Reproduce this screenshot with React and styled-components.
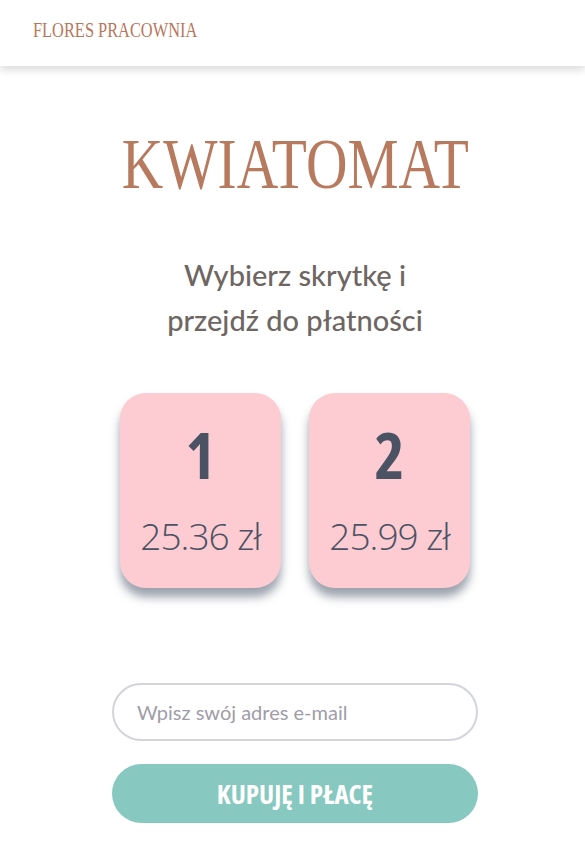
import React from "react";
import styled, { createGlobalStyle } from "styled-components";

const Global = createGlobalStyle`
  html, body { margin: 0; padding: 0; background: #ffffff; }
  body { font-family: Lato, "Open Sans", sans-serif; }
  * { box-sizing: border-box; }
`;

const Header = styled.header`
  height: 66px;
  background: #fff;
  box-shadow: 0 4px 8px rgba(0, 0, 0, 0.14);
  display: flex;
  align-items: center;
  padding-left: 33px;
`;

const Brand = styled.div`
  font-family: "Liberation Serif", serif;
  font-size: 21px;
  color: #b8775c;
  transform: scaleX(0.78);
  transform-origin: left center;
  white-space: nowrap;
  margin-top: -5px;
`;

const Main = styled.main`
  display: flex;
  flex-direction: column;
  align-items: center;
  padding-left: 5px;
`;

const Title = styled.h1`
  margin: 63px 0 0;
  font-family: "Liberation Serif", serif;
  font-weight: 400;
  font-size: 71px;
  line-height: 1;
  color: #b87a5e;
  transform: scaleX(0.81);
  white-space: nowrap;
`;

const Subtitle = styled.p`
  margin: 52px 0 0;
  font-family: Lato, sans-serif;
  font-size: 29px;
  font-weight: 500;
  line-height: 45px;
  color: #6e6662;
  text-align: center;
`;

const Lockers = styled.div`
  display: flex;
  gap: 28px;
  margin-top: 51px;
`;

const Locker = styled.button`
  width: 161px;
  height: 195px;
  border: none;
  border-radius: 26px;
  background: #fdcbd2;
  box-shadow: 0 9px 10px rgba(75, 85, 105, 0.55);
  display: flex;
  flex-direction: column;
  align-items: center;
  padding: 22px 0 0;
  color: #4a5263;
  font-family: "Open Sans", sans-serif;
  cursor: pointer;
`;

const Number = styled.span`
  font-size: 64px;
  font-weight: 700;
  font-stretch: 75%;
  line-height: 80px;
`;

const Price = styled.span`
  margin-top: 18px;
  font-size: 37px;
  font-weight: 300;
  letter-spacing: -1px;
  line-height: 46px;
`;

const Form = styled.form`
  display: flex;
  flex-direction: column;
  gap: 23px;
  margin-top: 95px;
  width: 366px;
`;

const Email = styled.input`
  height: 58px;
  border: 2px solid #d3d5db;
  border-radius: 29px;
  padding: 0 23px;
  font-family: Lato, sans-serif;
  font-size: 20px;
  outline: none;
  &::placeholder { color: #a09ca8; }
`;

const Buy = styled.button`
  height: 59px;
  border: none;
  border-radius: 30px;
  background: #87c8c0;
  color: #fff;
  font-family: "Open Sans", sans-serif;
  font-stretch: 75%;
  font-size: 27px;
  font-weight: 700;
  cursor: pointer;
`;

const lockers = [
  { id: 1, price: "25.36 zł" },
  { id: 2, price: "25.99 zł" },
];

export default function App() {
  return (
    <>
      <Global />
      <Header>
        <Brand>FLORES PRACOWNIA</Brand>
      </Header>
      <Main>
        <Title>KWIATOMAT</Title>
        <Subtitle>
          Wybierz skrytkę i
          <br />
          przejdź do płatności
        </Subtitle>
        <Lockers>
          {lockers.map((l) => (
            <Locker key={l.id} type="button">
              <Number>{l.id}</Number>
              <Price>{l.price}</Price>
            </Locker>
          ))}
        </Lockers>
        <Form onSubmit={(e) => e.preventDefault()}>
          <Email type="email" placeholder="Wpisz swój adres e-mail" />
          <Buy type="submit">KUPUJĘ I PŁACĘ</Buy>
        </Form>
      </Main>
    </>
  );
}
